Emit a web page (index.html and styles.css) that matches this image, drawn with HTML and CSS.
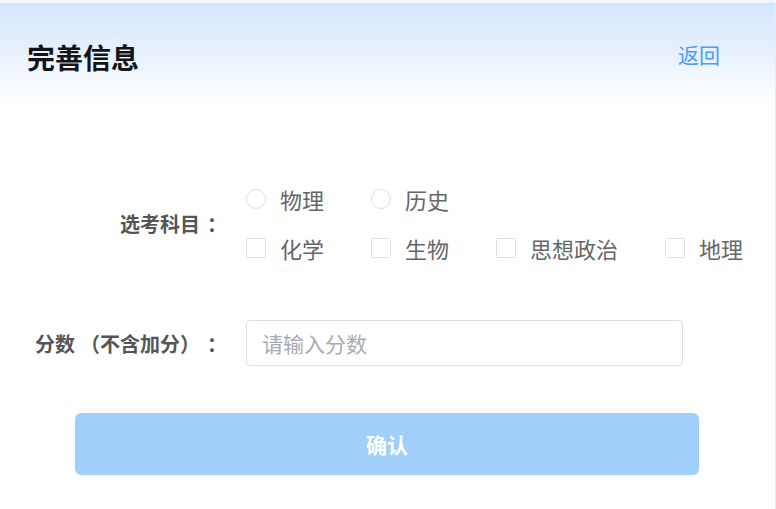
FILE: index.html
```html
<!DOCTYPE html>
<html lang="zh-CN">

<head>
	<meta charset="UTF-8">
	<meta name="viewport" content="width=device-width, initial-scale=1.0">
	<title>完善信息</title>
	<link rel="stylesheet" href="styles.css">
</head>

<body>
	<div class="dialog">
		<div class="dialog-header">
			<h1 class="dialog-title">完善信息</h1>
			<a class="back-link" href="#">返回</a>
		</div>

		<form class="info-form">
			<div class="form-item subjects">
				<label class="form-label">选考科目<span class="colon">：</span></label>
				<div class="options">
					<div class="option-row">
						<label class="option"><span class="radio"></span>物理</label>
						<label class="option"><span class="radio"></span>历史</label>
					</div>
					<div class="option-row">
						<label class="option"><span class="checkbox"></span>化学</label>
						<label class="option"><span class="checkbox"></span>生物</label>
						<label class="option"><span class="checkbox"></span>思想政治</label>
						<label class="option"><span class="checkbox"></span>地理</label>
					</div>
				</div>
			</div>

			<div class="form-item score">
				<label class="form-label">分数<span class="paren">（不含加分）</span><span class="colon">：</span></label>
				<input class="score-input" type="text" placeholder="请输入分数">
			</div>

			<button class="submit-btn" type="button">确认</button>
		</form>
	</div>
</body>

</html>
```

FILE: styles.css
```css
body {
	font-family: 'Noto Sans CJK SC', 'Noto Sans', sans-serif;
	margin: 0;
	padding-top: 3px;
	background-color: #f3f6fb;
}

.dialog {
	width: 775px;
	height: 506px;
	background-color: #ffffff;
	border-right: 1px solid #ececec;
}

.dialog-header {
	height: 102px;
	display: flex;
	justify-content: space-between;
	align-items: center;
	padding: 0 55px 0 27px;
	background: linear-gradient(180deg, #d5e6fc 0%, #e8f1fd 50%, #ffffff 100%);
}

.dialog-title {
	margin: 6px 0 0;
	font-size: 28px;
	font-weight: 700;
	color: #141414;
}

.back-link {
	font-size: 21px;
	color: #4a9ef0;
	text-decoration: none;
}

.info-form {
	padding-top: 80px;
}

.form-item {
	display: grid;
	grid-template-columns: 227px auto;
	column-gap: 19px;
	align-items: center;
}

.form-label {
	text-align: right;
	font-size: 20px;
	font-weight: 700;
	color: #555555;
	/* keep full-width brackets and colon at full width */
	text-spacing-trim: space-all;
}

/* the CJK colon sits left in its cell, push it toward the field */
.colon {
	padding-left: 7px;
}

.paren {
	margin-left: 5px;
}

.options {
	display: flex;
	flex-direction: column;
	row-gap: 21px;
}

.option-row {
	display: flex;
	column-gap: 47px;
}

.option {
	display: inline-flex;
	align-items: center;
	gap: 14px;
	height: 28px;
	font-size: 22px;
	color: #666666;
	white-space: nowrap;
}

.radio,
.checkbox {
	width: 18px;
	height: 18px;
	border: 1px solid #dcdfe6;
	background-color: #ffffff;
	flex-shrink: 0;
}

.radio {
	border-radius: 50%;
}

.checkbox {
	border-radius: 2px;
}

.score {
	margin-top: 58px;
}

.score-input {
	box-sizing: border-box;
	width: 437px;
	height: 46px;
	padding: 0 15px;
	border: 1px solid #dcdfe6;
	border-radius: 4px;
	font-family: inherit;
	font-size: 21px;
	color: #333333;
	outline: none;
}

.score-input::placeholder {
	color: #a8abb2;
}

.submit-btn {
	display: block;
	width: 624px;
	height: 62px;
	margin: 47px 0 0 75px;
	border: none;
	border-radius: 6px;
	background-color: #a0cffa;
	color: #ffffff;
	font-family: inherit;
	font-size: 21px;
	font-weight: 700;
	cursor: not-allowed;
}
```
